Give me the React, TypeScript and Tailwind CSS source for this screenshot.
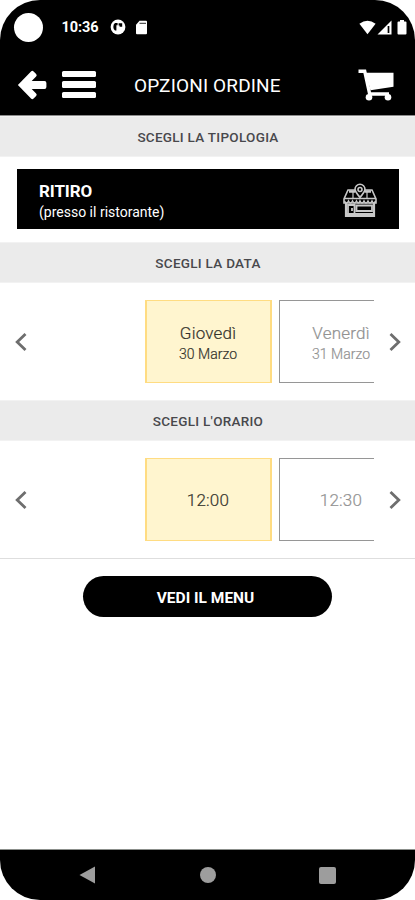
import type { ReactNode } from "react";

function StatusBar() {
  return (
    <div className="flex h-[54px] items-center pl-[14px] pr-[7px]">
      <div className="size-[29px] rounded-full bg-white" />
      <span className="ml-[18.5px] w-[38px] whitespace-nowrap pt-[2px] text-[14.5px] font-bold leading-none tracking-[-0.1px]">
        10:36
      </span>
      <svg className="ml-[10px]" width="16" height="16" viewBox="0 0 16 16">
        <circle cx="8" cy="8" r="7.4" fill="#fff" />
        <path d="M6.800 4H5Q3.300 5.200 3.300 8q0 2.200 1.700 3.600h1.400V6.300h1.200V4zM8.600 4.300h3.600v3.500H9.600V6.500H8.600z" fill="#000" />
      </svg>
      <svg className="ml-[9.5px]" width="13" height="15" viewBox="0 0 13 15">
        <path d="M4.500.7H11q1 0 1 1v11.600q0 1-1 1H2q-1 0-1-1V4.700z" fill="#fff" />
        <path d="M4.500 3.300h6.500" stroke="#555" strokeWidth="1.300" />
      </svg>
      <svg className="ml-auto" width="17" height="15" viewBox="0 0 17 15">
        <path d="M.4 3.700Q8.500-2.200 16.600 3.700L8.500 14.300z" fill="#fff" />
      </svg>
      <svg className="ml-px" width="15" height="15" viewBox="0 0 15 15">
        <path d="M14.500.5v14H.5z" fill="#fff" />
        <path d="M11.500 6v7" stroke="#000" strokeWidth="1.700" />
      </svg>
      <svg className="ml-[5px] mr-px" width="10" height="15" viewBox="0 0 10 15">
        <path d="M3 0h4v1.600h1.500q1 0 1 1v10.900q0 1-1 1h-7q-1 0-1-1V2.600q0-1 1-1H3z" fill="#fff" />
      </svg>
    </div>
  );
}

function AppBar() {
  return (
    <div className="flex h-[61px] items-center pl-[17px] pr-[21px]">
      <svg width="31" height="32" viewBox="0 0 31 32">
        <path
          d="M.9 16 14 2.400q1.300-1.300 2.600 0l2.500 2.500q1.300 1.400 0 2.700L14.700 12h12.800q1.900 0 1.900 1.900v4.200q0 1.900-1.900 1.900H14.700l4.400 4.400q1.300 1.300 0 2.700l-2.500 2.500q-1.300 1.300-2.600 0z"
          fill="#fff"
        />
      </svg>
      <div className="ml-[14px] flex w-[34px] flex-col gap-[4.500px]">
        <div className="h-[6.300px] rounded-[1.500px] bg-white" />
        <div className="h-[6.300px] rounded-[1.500px] bg-white" />
        <div className="h-[6.300px] rounded-[1.500px] bg-white" />
      </div>
      <h1 className="ml-[38px] whitespace-nowrap pt-px text-[19px] font-normal leading-none tracking-[0.150px]">
        OPZIONI ORDINE
      </h1>
      <svg className="ml-auto" width="37" height="34" viewBox="0 0 37 34">
        <path d="M1.500 3.200h6.200l5 22.800H32" fill="none" stroke="#fff" strokeWidth="3.400" />
        <path d="M8.500 4.700h28v14.100l-23 3.400z" fill="#fff" />
        <circle cx="12" cy="29.300" r="3.300" fill="#fff" />
        <circle cx="31" cy="29.300" r="3.300" fill="#fff" />
      </svg>
    </div>
  );
}

function SectionTitle({ children }: { children: ReactNode }) {
  return (
    <h2 className="flex h-[41px] items-center justify-center border-y border-[#f2f2f2] bg-[#ebebeb] pl-px pt-[3px] text-[13.500px] font-medium leading-none tracking-[0.280px] text-[#48484c]">
      {children}
    </h2>
  );
}

function StoreIcon() {
  return (
    <svg className="mt-px" width="34" height="34" viewBox="0 0 34 34" fill="none" stroke="#c8c8c8" strokeWidth="1.600">
      <path d="M12 7H5L1 16v4h32v-4L29 7h-7M1 15.500h32" />
      <path d="M6 8.500h6M22 8.500h6" strokeWidth="2.400" />
      <path d="M10 9v6M24 9v6" strokeWidth="1.200" />
      <path d="M17 14.500c-2-3-5-5-5-8.200a5 5 0 0 1 10 0c0 3.200-3 5.200-5 8.200z" />
      <circle cx="17" cy="6.500" r="2" />
      <path d="M1.500 18q2 4 4 0q2 4 4 0q2 4 4 0q2 4 3.500 0q2 4 4 0q2 4 4 0q2 4 4 0q2 4 3.500 0" />
      <path d="M3 20v13h28V20M2 31h30" strokeWidth="2.200" />
      <path d="M5 31v-9h6.500v9M9 25v3M13.500 22.500H29v5.500H13.500z" strokeWidth="1.800" />
    </svg>
  );
}

function Chevron({ flip = false }: { flip?: boolean }) {
  return (
    <svg className={flip ? "rotate-180" : ""} width="14" height="20" viewBox="0 0 14 20">
      <path d="M11.500 2 3.200 10l8.300 8" fill="none" stroke="#6e6e6e" strokeWidth="2.800" />
    </svg>
  );
}

function Card({ title, sub, active = false }: { title: string; sub?: string; active?: boolean }) {
  return (
    <div
      className={
        "flex w-[125px] shrink-0 flex-col items-center justify-center " +
        (sub ? "pt-[3px] " : "pt-[2px] ") +
        (active
          ? "border-[1.500px] border-[#ffdc82] bg-[#fff5cf] text-[#34332c] outline-[0.500px] outline-[#ffdc82]"
          : "border-[1.500px] border-[#969696] bg-white text-[#929292]")
      }
    >
      <span className="text-[17px] font-light leading-[21px] tracking-[0.200px] [-webkit-text-stroke:0.200px]">{title}</span>
      {sub && (
        <span className="text-[14px] font-light leading-[20px] tracking-[0.050px] [-webkit-text-stroke:0.200px]">{sub}</span>
      )}
    </div>
  );
}

function Picker({ children }: { children: ReactNode }) {
  return (
    <div className="flex h-[83px] items-center pl-[14px] pr-[13px]">
      <Chevron />
      <div className="ml-[14px] flex h-full w-[332px] gap-[8px] overflow-hidden pl-[103.500px]">{children}</div>
      <div className="ml-auto flex">
        <Chevron flip />
      </div>
    </div>
  );
}

export default function App() {
  return (
    <div className="h-[900px] w-[415px] overflow-hidden bg-white font-['Roboto',sans-serif]">
      <div className="flex h-full flex-col overflow-hidden rounded-[40px]">
        <header className="h-[116px] shrink-0 border-b border-[#8b8b8b] bg-black text-white">
          <StatusBar />
          <AppBar />
        </header>
        <main className="flex flex-1 flex-col">
          <SectionTitle>SCEGLI LA TIPOLOGIA</SectionTitle>
          <div className="ml-[17px] mr-[16px] mt-[12px] flex h-[60px] items-center justify-between bg-black pl-[22px] pr-[22px] text-white">
            <div className="flex flex-col pt-[5px]">
              <span className="text-[17px] font-bold leading-[21px] tracking-[-0.100px]">RITIRO</span>
              <span className="text-[14px] leading-[20px]">(presso il ristorante)</span>
            </div>
            <StoreIcon />
          </div>
          <div className="mt-[13px]">
            <SectionTitle>SCEGLI LA DATA</SectionTitle>
          </div>
          <div className="mt-[17px]">
            <Picker>
              <Card title="Giovedì" sub="30 Marzo" active />
              <Card title="Venerdì" sub="31 Marzo" />
            </Picker>
          </div>
          <div className="mt-[17px]">
            <SectionTitle>SCEGLI L'ORARIO</SectionTitle>
          </div>
          <div className="mt-[17px]">
            <Picker>
              <Card title="12:00" active />
              <Card title="12:30" />
            </Picker>
          </div>
          <div className="mt-[17px] h-px bg-[#dedede]" />
          <button className="mx-auto mt-[17px] flex h-[41px] w-[249px] items-center justify-center rounded-full bg-black pr-[4px] pt-[5px] text-[15.500px] font-bold leading-none text-white">
            VEDI IL MENU
          </button>
        </main>
        <nav className="flex h-[51px] shrink-0 items-center border-t border-[#8b8f8b] bg-black pl-[79px]">
          <svg width="17" height="18" viewBox="0 0 17 18">
            <path d="M16 .500v17L.500 9z" fill="#9d9d9d" />
          </svg>
          <div className="ml-[104px] size-[16px] rounded-full bg-[#9d9d9d]" />
          <div className="ml-[103px] size-[17px] rounded-[2px] bg-[#9d9d9d]" />
        </nav>
      </div>
    </div>
  );
}
